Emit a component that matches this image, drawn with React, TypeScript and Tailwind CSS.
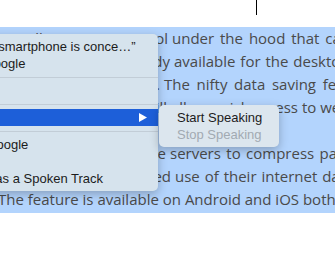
import { Fragment } from "react";

type Line = { split: string; spacing: string; before: string; after: string };

const lines: Line[] = [
  { split: "w-[172px]", spacing: "[word-spacing:2px]", before: "as we now see, a small compression tool", after: "under the hood that can" },
  { split: "w-[174px]", spacing: "[word-spacing:1px]", before: "help you save data. It is already", after: "available for the desktop version" },
  { split: "w-[164px]", spacing: "[word-spacing:2.75px]", before: "of the browser as an extension.", after: "The nifty data saving feature" },
  { split: "w-[171px]", spacing: "[word-spacing:0px]", before: "will", after: "allow quick access to web" },
  { split: "w-[0px]", spacing: "[word-spacing:0px]", before: "", after: "pages quickly with less data." },
  { split: "w-[170px]", spacing: "[word-spacing:1.5px]", before: "Chrome on Android makes use of the", after: "servers to compress pages" },
  { split: "w-[175px]", spacing: "[word-spacing:1px]", before: "for those who have a limited", after: "use of their internet data." },
];

function MenuItem({ label, active }: { label: string; active?: boolean }) {
  return (
    <div
      className={
        active
          ? "flex h-[17px] items-center bg-[#1d5fd9] pl-[20px] text-white"
          : "flex h-[17px] items-center pl-[20px] text-[#1c1c1c]"
      }
    >
      <span className="whitespace-nowrap">{label}</span>
      {active && (
        <svg className="ml-auto mr-[11px]" width="8" height="9" viewBox="0 0 8 9">
          <polygon points="0,0 8,4.5 0,9" fill="white" />
        </svg>
      )}
    </div>
  );
}

function Separator() {
  return <div className="mt-[5px] mb-[4px] h-px bg-[#c2cdd7]" />;
}

export default function App() {
  return (
    <div className="relative h-[256px] w-[335px] overflow-hidden bg-white font-['Open_Sans',sans-serif] text-[15px] text-[#4a4a4a]">
      <div className="absolute left-[256px] top-0 h-[15px] w-px bg-black" />

      <div className="mt-[27px] bg-[#b3d4fd] pb-[2px]">
        {lines.map((line, i) => (
          <div key={i} className="flex h-[23px] items-center whitespace-nowrap leading-[23px]">
            <div className={`flex shrink-0 justify-end ${line.before ? "pr-[4px]" : ""} ${line.split}`}>
              <span>{line.before}</span>
            </div>
            <span className={line.spacing}>{line.after}</span>
          </div>
        ))}
        <div className="-ml-[2px] h-[23px] whitespace-nowrap leading-[23px]">
          The feature is available on Android and iOS both
        </div>
      </div>

      <div className="absolute left-[-108px] top-[34px] w-[266px] rounded-[5px] bg-[#d6e3ed] pt-[4px] pb-[4px] font-['Liberation_Sans',Arial,sans-serif] text-[13px] shadow-[0_3px_10px_rgba(0,0,0,0.25)]">
        <MenuItem label="Look Up “Your smartphone is conce…”" />
        <MenuItem label="Search with Google" />
        <Separator />
        <MenuItem label="Copy" />
        <Separator />
        <MenuItem label="Speech" active />
        <Separator />
        <MenuItem label="Search With Google" />
        <MenuItem label="Spotlight" />
        <MenuItem label="Add to iTunes as a Spoken Track" />
      </div>

      <div className="absolute left-[159px] top-[105px] w-[120px] rounded-[5px] bg-[#dce6ee] pt-[4px] pb-[4px] font-['Liberation_Sans',Arial,sans-serif] text-[13px] shadow-[0_3px_10px_rgba(0,0,0,0.25)]">
        {["Start Speaking", "Stop Speaking"].map((label, i) => (
          <Fragment key={label}>
            <div
              className={
                i === 0
                  ? "flex h-[17px] items-center pl-[18px] text-[#1c1c1c]"
                  : "flex h-[17px] items-center pl-[18px] text-[#a2aab2]"
              }
            >
              {label}
            </div>
          </Fragment>
        ))}
      </div>
    </div>
  );
}
